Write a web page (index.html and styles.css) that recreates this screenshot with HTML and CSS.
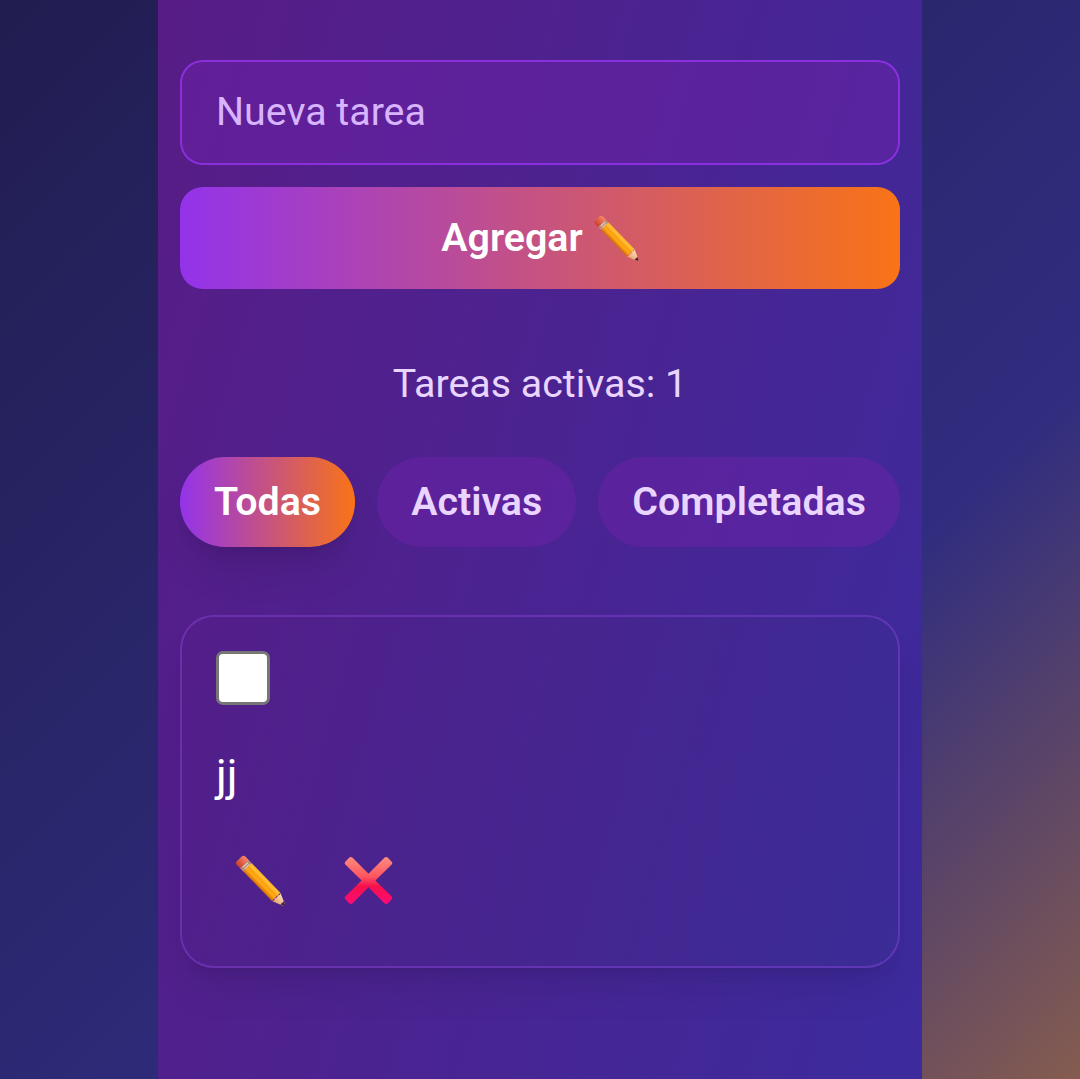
FILE: index.html
```html
<!DOCTYPE html>
<html lang="es">
<head>
<meta charset="utf-8">
<title>Tareas</title>
<link rel="stylesheet" href="styles.css">
</head>
<body>
<svg class="defs" width="0" height="0" aria-hidden="true">
  <defs>
    <linearGradient id="wood" gradientUnits="userSpaceOnUse" x1="0" y1="-6" x2="0" y2="6">
      <stop offset="0" stop-color="#ffb52b"/>
      <stop offset=".25" stop-color="#ffc034"/>
      <stop offset=".4" stop-color="#fba010"/>
      <stop offset=".65" stop-color="#ffa915"/>
      <stop offset=".78" stop-color="#f0900f"/>
      <stop offset="1" stop-color="#c9690c"/>
    </linearGradient>
    <linearGradient id="rubber" x1="0" y1="0" x2="0" y2="1">
      <stop offset="0" stop-color="#fb8767"/>
      <stop offset="1" stop-color="#c93f2c"/>
    </linearGradient>
    <linearGradient id="tip" x1="0" y1="0" x2="0" y2="1">
      <stop offset="0" stop-color="#ffe3b5"/>
      <stop offset="1" stop-color="#e39c6c"/>
    </linearGradient>
    <linearGradient id="red" gradientUnits="userSpaceOnUse" x1="0" y1="0" x2="0" y2="50">
      <stop offset="0" stop-color="#ff8f80"/>
      <stop offset=".42" stop-color="#ff5560"/>
      <stop offset=".62" stop-color="#f5104c"/>
      <stop offset="1" stop-color="#ff0a78"/>
    </linearGradient>
    <symbol id="pencil" viewBox="0 0 50 52">
      <g transform="translate(5.8 6) rotate(45.8)">
        <path fill="url(#rubber)" d="M5-6H0Q-3-6-3-3V3Q-3 6 0 6H5Z"/>
        <path fill="#b98f7c" d="M4.5-5.9H9.5V5.9H4.5Z"/>
        <path fill="#e6cdb8" d="M5-3.5H6.2V3H5ZM7.5-3.5H8.6V3H7.5Z"/>
        <path fill="url(#wood)" d="M9-5.9H50V5.9H9Z"/>
        <path fill="url(#tip)" d="M50-5.9L61-1.3V1.3L50 5.9Q52 3.9 50 2Q52 0 50-2Q52-3.9 50-5.9Z"/>
        <path fill="#4b2638" d="M58.5-2.3L61.6-.8Q62.3 0 61.6 .8L58.5 2.3Z"/>
      </g>
    </symbol>
    <symbol id="cross" viewBox="0 0 50 50">
      <path fill="url(#red)" d="M1.6 5.6L5.2 1.9Q7 .2 8.8 1.9L25 18.1L41.2 1.9Q43 .2 44.8 1.9L48.4 5.6Q50.1 7.3 48.4 9L32 25L48.4 41.1Q50.1 42.8 48.4 44.5L44.8 48.1Q43 49.8 41.2 48.1L25 31.9L8.8 48.1Q7 49.8 5.2 48.1L1.6 44.5Q-.1 42.8 1.6 41.1L18 25L1.6 9Q-.1 7.3 1.6 5.6Z"/>
    </symbol>
  </defs>
</svg>
<main class="panel">
  <form class="new-task">
    <input class="field" type="text" placeholder="Nueva tarea" aria-label="Nueva tarea">
    <button class="add" type="button">Agregar <svg class="add-icon" aria-hidden="true"><use href="#pencil"/></svg></button>
  </form>
  <p class="count">Tareas activas: 1</p>
  <nav class="filters">
    <button class="filter filter-on" type="button">Todas</button>
    <button class="filter" type="button">Activas</button>
    <button class="filter" type="button">Completadas</button>
  </nav>
  <article class="task">
    <input class="check" type="checkbox" aria-label="Completar">
    <span class="title">jj</span>
    <div class="actions">
      <button class="action" type="button" aria-label="Editar"><svg class="edit-icon"><use href="#pencil"/></svg></button>
      <button class="action" type="button" aria-label="Eliminar"><svg class="delete-icon"><use href="#cross"/></svg></button>
    </div>
  </article>
</main>
</body>
</html>
```
FILE: styles.css
```css
* { box-sizing: border-box; }

body {
  margin: 0;
  height: 1079px;
  overflow: hidden;
  display: flex;
  justify-content: center;
  font-family: Roboto, "Liberation Sans", sans-serif;
  font-size: 39.375px;
  line-height: 56px;
  background: linear-gradient(135deg, #211d50 0%, #302d80 67.6%, #855c4f 100%);
}

button, input { font: inherit; margin: 0; }
button { border: 0; padding: 0; background: none; }

.defs { position: absolute; }

.panel {
  width: 764px;
  height: 1079px;
  padding: 60px 22px 0;
  background: linear-gradient(106deg, #581c86 0%, #3c2b9d 100%);
}

.new-task { display: flex; flex-direction: column; gap: 22px; }

.field {
  height: 105px;
  padding: 0 34px 2px;
  border: 2px solid rgba(147, 51, 234, .85);
  border-radius: 23px;
  background: rgba(107, 33, 168, .5);
  color: #fff;
  outline: 0;
}
.field::placeholder { color: #d8b4fe; opacity: 1; }

.add {
  height: 102px;
  display: flex;
  align-items: center;
  justify-content: center;
  gap: 11px;
  border-radius: 23px;
  background: linear-gradient(90deg, #9333ea, #f97316);
  color: #fff;
  font-weight: 600;
}
.add-icon { width: 45px; height: 47px; }

.count {
  margin: 67px 0 0;
  text-align: center;
  color: #e9d5ff;
}

.filters { display: flex; justify-content: space-between; margin-top: 45px; }

.filter {
  height: 90px;
  padding: 0 34px;
  border-radius: 45px;
  background: rgba(107, 33, 168, .5);
  color: #e9d5ff;
  font-weight: 600;
}
.filter-on {
  background: linear-gradient(90deg, #9333ea, #f97316);
  color: #fff;
  box-shadow: 0 28px 42px -8px rgba(0, 0, 0, .1), 0 11px 17px -11px rgba(0, 0, 0, .14);
}

.task {
  height: 353px;
  margin-top: 68px;
  padding: 34px;
  display: flex;
  flex-direction: column;
  align-items: flex-start;
  border: 2px solid rgba(168, 85, 247, .3);
  border-radius: 34px;
  background: linear-gradient(106deg, rgba(88, 28, 135, .25), rgba(55, 48, 140, .35)) padding-box;
  box-shadow: 0 28px 42px -8px rgba(0, 0, 0, .08), 0 11px 17px -11px rgba(0, 0, 0, .12);
}

.check {
  appearance: none;
  width: 54px;
  height: 54px;
  border: 3px solid #767676;
  border-radius: 7px;
  background: #fff;
}

.title {
  margin-top: 37px;
  font-size: 45px;
  line-height: 68px;
  font-weight: 400;
  color: #fff;
}

.actions { display: flex; align-items: flex-start; margin: 45px 0 0 19px; gap: 58px; }
.action { display: flex; }
.edit-icon { width: 51px; height: 52px; }
.delete-icon { width: 49px; height: 49px; margin-top: 1px; }
```
